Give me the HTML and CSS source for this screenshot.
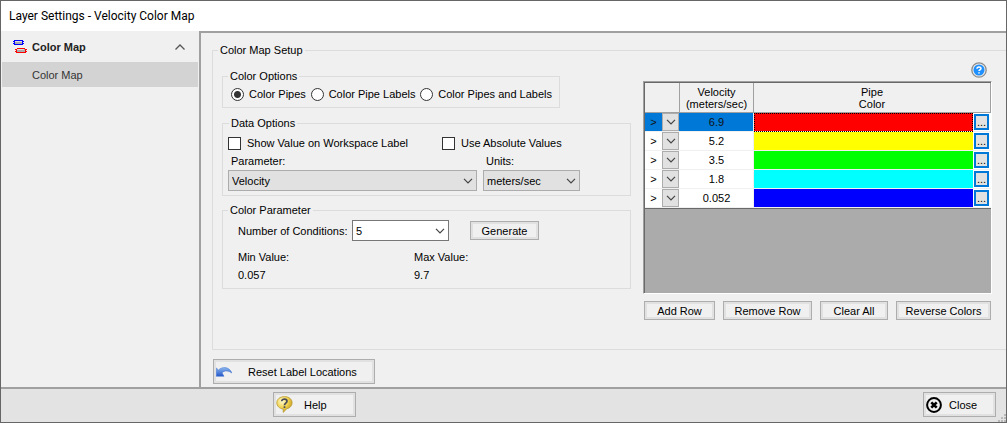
FILE: index.html
```html
<!DOCTYPE html>
<html lang="en">
<head>
<meta charset="utf-8">
<title>Layer Settings - Velocity Color Map</title>
<link rel="stylesheet" href="styles.css">
</head>
<body>
<div class="window">
  <header class="titlebar"><h1 class="title">Layer Settings - Velocity Color Map</h1></header>
  <div class="body">
    <nav class="sidebar">
      <button class="nav-head" type="button">
        <svg class="layers-icon" width="14" height="14" viewBox="0 0 14 14" shape-rendering="crispEdges"><path fill="#aaa" d="M1 1h9v3H1zM3 9h9v3H3z"/><path fill="#ddd" d="M2 1h7v1H2zM4 9h7v1H4z"/><path fill="#00f" d="M1 0h9v1H1zM1 4h9v1H1zM0 1h2v1H0zM1 2h1v1H1zM0 3h2v1H0zM9 1h2v1H9zM9 2h1v1H9zM9 3h2v1H9z"/><path fill="#f00" d="M4 8h8v1H4zM3 12h10v1H3zM2 9h2v1H2zM3 10h1v1H3zM2 11h2v1H2zM12 9h2v1h-2zM12 10h1v1h-1zM12 11h2v1h-2z"/></svg>
        <span class="nav-label">Color Map</span>
        <svg class="chevron" width="10" height="6" viewBox="0 0 10 6" fill="none" stroke="#555" stroke-width="1.3"><path d="M.5 5.5 5 1l4.5 4.5"/></svg>
      </button>
      <a class="nav-item" href="#color-map">Color Map</a>
    </nav>
    <main class="main" id="color-map">
      <fieldset class="group setup">
        <legend>Color Map Setup</legend>
        <div class="setup-grid">
          <div class="options">
            <fieldset class="group color-options">
              <legend>Color Options</legend>
              <div class="radios">
                <label class="choice"><input type="radio" name="color" checked>Color Pipes</label>
                <label class="choice"><input type="radio" name="color">Color Pipe Labels</label>
                <label class="choice"><input type="radio" name="color">Color Pipes and Labels</label>
              </div>
            </fieldset>
            <fieldset class="group data-options">
              <legend>Data Options</legend>
              <div class="checks">
                <label class="choice"><input type="checkbox">Show Value on Workspace Label</label>
                <label class="choice"><input type="checkbox">Use Absolute Values</label>
              </div>
              <div class="selects">
                <label for="parameter">Parameter:</label>
                <label for="units">Units:</label>
                <select class="select" id="parameter"><option>Velocity</option></select>
                <select class="select" id="units"><option>meters/sec</option></select>
              </div>
            </fieldset>
            <fieldset class="group color-parameter">
              <legend>Color Parameter</legend>
              <div class="conditions">
                <label for="conditions">Number of Conditions:</label>
                <select class="select select-edit" id="conditions"><option>5</option></select>
                <button class="btn" type="button">Generate</button>
              </div>
              <dl class="range">
                <div><dt>Min Value:</dt><dd>0.057</dd></div>
                <div><dt>Max Value:</dt><dd>9.7</dd></div>
              </dl>
            </fieldset>
          </div>
          <div class="colors">
            <button class="info" type="button" aria-label="Help">
              <svg width="16" height="16" viewBox="0 0 16 16"><circle cx="8" cy="8" r="7.2" fill="#e8e8e8" stroke="#8d8d8d" stroke-width="1.3"/><circle cx="8" cy="8" r="5.5" fill="#1e90ff"/><path d="M6 6.7C6 4.3 10 4.4 10 6.5c0 1.3-2 1.2-2 2.6M8 10.2v1.4" fill="none" stroke="#fff" stroke-width="1.5"/></svg>
            </button>
            <div class="grid-frame">
              <table class="grid">
                <colgroup><col class="c-mark"><col class="c-drop"><col class="c-value"><col><col class="c-more"></colgroup>
                <thead><tr><th colspan="2"></th><th>Velocity<br>(meters/sec)</th><th colspan="2">Pipe<br>Color</th></tr></thead>
                <tbody>
                  <tr class="selected"><td>&gt;</td><td><button class="drop" type="button" aria-label="Open"></button></td><td>6.9</td><td class="swatch red"></td><td><button class="more" type="button">...</button></td></tr>
                  <tr><td>&gt;</td><td><button class="drop" type="button" aria-label="Open"></button></td><td>5.2</td><td class="swatch yellow"></td><td><button class="more" type="button">...</button></td></tr>
                  <tr><td>&gt;</td><td><button class="drop" type="button" aria-label="Open"></button></td><td>3.5</td><td class="swatch lime"></td><td><button class="more" type="button">...</button></td></tr>
                  <tr><td>&gt;</td><td><button class="drop" type="button" aria-label="Open"></button></td><td>1.8</td><td class="swatch cyan"></td><td><button class="more" type="button">...</button></td></tr>
                  <tr><td>&gt;</td><td><button class="drop" type="button" aria-label="Open"></button></td><td>0.052</td><td class="swatch blue"></td><td><button class="more" type="button">...</button></td></tr>
                </tbody>
              </table>
            </div>
            <div class="row-actions">
              <button class="btn" type="button">Add Row</button>
              <button class="btn" type="button">Remove Row</button>
              <button class="btn" type="button">Clear All</button>
              <button class="btn" type="button">Reverse Colors</button>
            </div>
          </div>
        </div>
      </fieldset>
      <button class="btn btn-icon reset" type="button">
        <svg width="16" height="16" viewBox="0 0 16 16"><defs><linearGradient id="undo" x1="0" y1="0" x2="0" y2="1"><stop offset="0" stop-color="#8db8ee"/><stop offset="1" stop-color="#2456c8"/></linearGradient></defs><path fill="url(#undo)" stroke="#3a6fd0" stroke-width=".5" d="M.3 4 2.500 6C6 2.300 13.500 2.500 15.800 9 12.500 6.500 9 6.300 6 8.700L8 12.300H.3z"/></svg>
        <span>Reset Label Locations</span>
      </button>
    </main>
  </div>
  <footer class="footer">
    <button class="btn btn-icon help" type="button">
      <svg width="17" height="17" viewBox="0 0 17 17"><defs><radialGradient id="bubble" cx=".35" cy=".3" r=".8"><stop offset="0" stop-color="#fffbd0"/><stop offset=".5" stop-color="#f0d24c"/><stop offset="1" stop-color="#b98c10"/></radialGradient></defs><path fill="url(#bubble)" stroke="#b79a3c" stroke-width=".8" d="M8.500 .6c4.500 0 7.600 2.600 7.600 6.200 0 3-2.200 5.300-5.300 6L7.200 16.400V13C3.400 12.600.8 10 .8 6.800.8 3.200 4 .6 8.500.6z"/><path d="M5.700 5.300C5.700 2.300 11 2.300 11 5.300c0 2-2.500 1.800-2.500 4M8.500 10.300v1.700" fill="none" stroke="#4b4b58" stroke-width="1.700"/></svg>
      <span>Help</span>
    </button>
    <button class="btn btn-icon close" type="button">
      <svg width="16" height="16" viewBox="0 0 16 16" fill="none" stroke="#000"><circle cx="8" cy="8" r="6.900" stroke-width="2"/><path d="m5.300 5.300 5.400 5.400m0-5.400-5.400 5.400" stroke-width="2.600"/></svg>
      <span>Close</span>
    </button>
    <svg class="grip" width="8" height="8" viewBox="0 0 8 8" fill="#b8b8b8"><path d="M6 0h2v2H6zM3 3h2v2H3zM6 3h2v2H6zM0 6h2v2H0zM3 6h2v2H3zM6 6h2v2H6z"/></svg>
  </footer>
</div>
</body>
</html>
```
FILE: styles.css
```css
* { box-sizing: border-box; }
body {
  margin: 0;
  font: 11px/14px "Liberation Sans", Arial, sans-serif;
  color: #000;
}
button, select, input { font: inherit; color: inherit; margin: 0; }
.window {
  display: flex;
  flex-direction: column;
  min-height: 100vh;
  background: #f0f0f0;
  border: 1px solid #666;
}
.titlebar { background: #fff; padding: 6px 8px; }
.title { margin: 0; font: 12px/18px Roboto, sans-serif; }
.body { flex: 1; display: flex; }
.sidebar { flex: 0 0 198px; color: #222; }
.nav-head {
  display: flex;
  align-items: center;
  width: 100%;
  height: 31px;
  padding: 0 14px 0 12px;
  border: 0;
  background: none;
  font-weight: bold;
  text-align: left;
}
.nav-label { flex: 1; margin-left: 5px; }
.nav-item {
  display: block;
  margin: 0 1px;
  padding: 6px 0 5px 30px;
  background: #d3d3d3;
  color: #333;
  text-decoration: none;
}
.main {
  flex: 1;
  min-width: 0;
  border: solid #a0a0a0;
  border-width: 2px 0 0 2px;
  padding: 10px 0 2px 11px;
}
.group { margin: 0; padding: 0; min-width: 0; border: 1px solid #dcdcdc; }
.group > legend { padding: 0 2px; margin-left: 5px; }
.setup { border-right: 0; padding: 0 14px 29px 9px; }
.setup > legend { margin-left: -4px; }
.setup-grid {
  display: grid;
  grid-template-columns: minmax(0, 409fr) minmax(0, 349fr);
  column-gap: 12px;
}
.options { padding-top: 12px; }
.color-options { width: 338px; max-width: 100%; padding: 3px 7px 5px 0; }
.radios { display: flex; justify-content: space-between; padding-left: 8px; }
.choice { display: flex; align-items: center; gap: 6px; white-space: nowrap; }
.radios .choice { gap: 5px; height: 16px; }
.choice input { appearance: none; width: 13px; height: 13px; background: #fff; border: 1px solid #333; }
.choice input[type="radio"] { border-radius: 50%; }
.choice input[type="radio"]:checked { background: radial-gradient(circle, #333 3px, #fff 4px); }
.data-options { margin-top: 8px; padding: 6px 5px 4px; }
.data-options > legend { margin-left: 1px; }
.checks { display: grid; grid-template-columns: 214px 1fr; }
.selects { display: grid; grid-template-columns: 249px 97px; gap: 2px 6px; margin-top: 4px; }
.selects label { padding-left: 3px; }
.select {
  appearance: none;
  width: 100%;
  height: 21px;
  padding: 0 20px 0 3px;
  border: 1px solid #acacac;
  border-radius: 0;
  background: #e1e1e1 url("data:image/svg+xml,%3Csvg xmlns='http://www.w3.org/2000/svg' width='10' height='6' fill='none' stroke='%23444' stroke-width='1.2'%3E%3Cpath d='M1 .8l4 4 4-4'/%3E%3C/svg%3E") no-repeat right 3px center;
}
.select-edit { background-color: #fff; border-color: #777; }
.color-parameter { margin-top: 7px; padding: 3px 15px 6px; }
.color-parameter > legend { margin-left: -10px; }
.conditions { display: grid; grid-template-columns: 114px 97px auto; align-items: center; }
.conditions .btn { margin-left: 21px; width: 69px; }
.range { display: grid; grid-template-columns: 176px 1fr; margin: 9px 0 0; }
.range dd { margin: 4px 0 0; }
.btn {
  height: 19px;
  padding: 0;
  border: 1px solid #adadad;
  box-shadow: inset 0 0 0 2px #e1e1e1;
  background: #f0f0f0;
  white-space: nowrap;
}
.btn-icon { display: flex; align-items: center; height: 25px; padding: 0 2px; }
.colors { padding-top: 5px; }
.info { display: block; margin: 0 5px 3px auto; padding: 0; border: 0; background: none; }
.info svg { display: block; }
.grid-frame {
  height: 213px;
  border: 1px solid #a0a0a0;
  border-right-color: #fff;
  border-bottom-color: #fff;
  box-shadow: inset 1px 1px #696969;
  padding: 1px 0 0 1px;
  background: #ababab;
}
.grid { width: 100%; table-layout: fixed; border-collapse: separate; border-spacing: 0; background: #fff; border-bottom: 1px solid #696969; }
.c-mark { width: 17px; }
.c-drop { width: 18px; }
.c-value { width: 74px; }
.c-more { width: 18px; }
.grid th { height: 30px; padding: 2px 0; background: #f0f0f0; font-weight: normal; line-height: 12px; border: solid #a0a0a0; border-width: 0 1px 1px 0; }
.grid td { height: 19px; padding: 0; text-align: center; border-bottom: 1px solid #f0f0f0; }
.grid td:nth-child(3) { border-right: 1px solid #f0f0f0; }
.selected td:nth-child(-n+3) { background: #0078d7; color: #111; }
.drop { display: block; width: 17px; height: 18px; padding: 0; border: 1px solid #acacac; background: #e1e1e1 url("data:image/svg+xml,%3Csvg xmlns='http://www.w3.org/2000/svg' width='10' height='6' fill='none' stroke='%23444' stroke-width='1.2'%3E%3Cpath d='M1 .8l4 4 4-4'/%3E%3C/svg%3E") no-repeat center; }
.more { display: block; width: 15px; height: 16px; margin-left: 1px; padding: 0; border: 2px solid #0078d7; background: #e1e1e1; line-height: 12px; }
.red { background: #f00; }
.selected .swatch { outline: 1px dotted #000; outline-offset: -1px; }
.yellow { background: #ff0; }
.lime { background: #0f0; }
.cyan { background: #0ff; }
.blue { background: #00f; }
.row-actions { display: grid; grid-template-columns: 71fr 89fr 68fr 95fr; gap: 8px; margin: 7px 1px 0; }
.reset { margin: 9px 0 0 1px; width: 162px; gap: 16px; }
.footer { position: relative; display: flex; justify-content: space-between; padding: 3px 10px 5px 272px; background: #e3e3e3; border-top: 2px solid #a0a0a0; }
.help { width: 83px; gap: 11px; }
.close { width: 73px; gap: 7px; }
.grip { position: absolute; right: 0; bottom: 0; }
```
